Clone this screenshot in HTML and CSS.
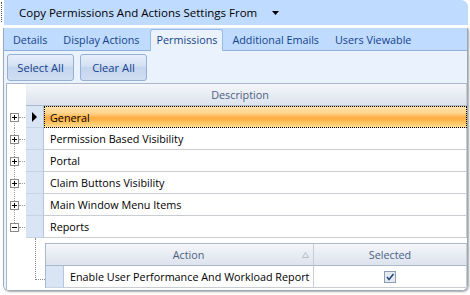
FILE: index.html
```html
<!DOCTYPE html>
<html lang="en">
<head>
    <meta charset="UTF-8">
    <title>Permissions</title>
    <link rel="stylesheet" href="styles.css">
</head>
<body>
<div class="page">
    <span class="focus-edge"></span>
    <div class="frame">
        <div class="title">
            Copy Permissions And Actions Settings From
            <svg class="caret" width="7" height="4" viewBox="0 0 7 4"><path d="M0 0h7L3.5 4z" fill="#000"/></svg>
        </div>
        <div class="title-gap"></div>

        <div class="tab-box">
            <div class="tabs">
                <span class="tab">Details</span>
                <span class="tab">Display Actions</span>
                <span class="tab active">Permissions</span>
                <span class="tab">Additional Emails</span>
                <span class="tab">Users Viewable</span>
            </div>

            <div class="tab-page">
                <div class="button-group">
                    <button class="button">Select All</button>
                    <button class="button">Clear All</button>
                </div>

                <div class="grid">
                    <div class="row head">
                        <div class="tree"></div>
                        <div class="cell head-cell">Description</div>
                    </div>

                    <div class="row">
                        <div class="tree first">
                            <svg class="expander" width="9" height="9" viewBox="0 0 9 9"><rect x="0.5" y="0.5" width="8" height="8" fill="#fff" stroke="#8a8a8a"/><path d="M2 4.5h5M4.5 2v5" stroke="#000"/></svg>
                            <span class="tick"></span>
                        </div>
                        <div class="row-head">
                            <svg width="5" height="10" viewBox="0 0 5 10"><path d="M0 0l5 5-5 5z" fill="#000"/></svg>
                        </div>
                        <div class="cell selected">General</div>
                    </div>

                    <div class="row">
                        <div class="tree mid">
                            <svg class="expander" width="9" height="9" viewBox="0 0 9 9"><rect x="0.5" y="0.5" width="8" height="8" fill="#fff" stroke="#8a8a8a"/><path d="M2 4.5h5M4.5 2v5" stroke="#000"/></svg>
                            <span class="tick"></span>
                        </div>
                        <div class="row-head"></div>
                        <div class="cell">Permission Based Visibility</div>
                    </div>

                    <div class="row">
                        <div class="tree mid">
                            <svg class="expander" width="9" height="9" viewBox="0 0 9 9"><rect x="0.5" y="0.5" width="8" height="8" fill="#fff" stroke="#8a8a8a"/><path d="M2 4.5h5M4.5 2v5" stroke="#000"/></svg>
                            <span class="tick"></span>
                        </div>
                        <div class="row-head"></div>
                        <div class="cell">Portal</div>
                    </div>

                    <div class="row">
                        <div class="tree mid">
                            <svg class="expander" width="9" height="9" viewBox="0 0 9 9"><rect x="0.5" y="0.5" width="8" height="8" fill="#fff" stroke="#8a8a8a"/><path d="M2 4.5h5M4.5 2v5" stroke="#000"/></svg>
                            <span class="tick"></span>
                        </div>
                        <div class="row-head"></div>
                        <div class="cell">Claim Buttons Visibility</div>
                    </div>

                    <div class="row">
                        <div class="tree mid">
                            <svg class="expander" width="9" height="9" viewBox="0 0 9 9"><rect x="0.5" y="0.5" width="8" height="8" fill="#fff" stroke="#8a8a8a"/><path d="M2 4.5h5M4.5 2v5" stroke="#000"/></svg>
                            <span class="tick"></span>
                        </div>
                        <div class="row-head"></div>
                        <div class="cell">Main Window Menu Items</div>
                    </div>

                    <div class="row">
                        <div class="tree last">
                            <svg class="expander" width="9" height="9" viewBox="0 0 9 9"><rect x="0.5" y="0.5" width="8" height="8" fill="#fff" stroke="#8a8a8a"/><path d="M2 4.5h5" stroke="#000"/></svg>
                            <span class="tick"></span>
                        </div>
                        <div class="row-head"></div>
                        <div class="cell">Reports</div>
                    </div>

                    <!-- child band of Reports -->
                    <div class="detail">
                        <div class="tree"></div>
                        <div class="connector"><span class="elbow"></span></div>
                        <div class="child-grid">
                            <div class="child-row head">
                                <div class="row-head head-cell"></div>
                                <div class="cell head-cell action-col">
                                    Action
                                    <svg class="sort" width="7" height="6" viewBox="0 0 7 6"><path d="M3.5 0.5L6.5 5.5H0.5z" fill="none" stroke="#b9bec6"/></svg>
                                </div>
                                <div class="cell head-cell selected-col">Selected</div>
                            </div>
                            <div class="child-row">
                                <div class="row-head"></div>
                                <div class="cell action-col">Enable User Performance And Workload Report</div>
                                <div class="cell selected-col">
                                    <svg width="12" height="12" viewBox="0 0 12 12"><rect x="0.5" y="0.5" width="11" height="11" fill="#e4eaf2" stroke="#8e9db3"/><path d="M3 6l2 2.5L9.5 3" fill="none" stroke="#2c4a7c" stroke-width="1.6"/></svg>
                                </div>
                            </div>
                        </div>
                    </div>
                </div>
            </div>
        </div>
    </div>
</div>
</body>
</html>
```

FILE: styles.css
```css
/* office 2007 blue */
:root {
    --office-blue: #bfdbff;
    --office-dark: #15428b;
    --page-blue: #eaf2fd;
    --line-gray: #c9ccd1;
    --row-head: #d9e5f4;
}

body {
    margin: 0;
    padding: 0;
    background: #fff;
    font-family: 'Open Sans', 'Noto Sans', sans-serif;
    font-size: 10.8px;
    color: #000;
}

.page {
    display: flex;
    height: 295px;
}

.focus-edge {
    width: 0;
    height: 20px;
    margin: 2px 0 0 1px;
    border-left: 1px dotted #555;
}

.frame {
    width: 465px;
    margin-left: 1px;
    display: flex;
    flex-direction: column;
}

.title {
    height: 25px;
    margin-left: 1px;
    padding-left: 15px;
    display: flex;
    align-items: center;
    font-size: 11.5px;
    background: var(--office-blue);
    border-top-right-radius: 7px;
}

.caret {
    margin-left: 15px;
    margin-top: 1px;
}

.title-gap {
    height: 3px;
}

.tab-box {
    height: 262px;
    display: flex;
    flex-direction: column;
    border: 1px solid #9ea9b8;
    border-top: none;
    border-radius: 0 0 6px 6px;
    box-shadow: 1px 1px 2px rgba(0, 0, 0, 0.35);
    overflow: hidden;
}

.tabs {
    height: 22px;
    display: flex;
    align-items: flex-end;
    padding-left: 1px;
    background: var(--office-blue);
    border-bottom: 1px solid #8fb0dc;
}

.tab {
    height: 20px;
    padding: 0 7px;
    line-height: 20px;
    color: var(--office-dark);
    border: 1px solid transparent;
    border-bottom: none;
    white-space: nowrap;
}

.tab.active {
    height: 21px;
    padding: 0 5px;
    margin: 0 1px -1px 3px;
    background: var(--page-blue);
    border-color: #9cbbe3;
    border-radius: 3px 3px 0 0;
}

.tab-page {
    flex: 1;
    display: flex;
    flex-direction: column;
    padding: 3px 0 0 2px;
    background: var(--page-blue);
}

.button-group {
    display: flex;
    gap: 6px;
    padding-left: 1px;
}

.button {
    width: 67px;
    height: 27px;
    padding: 0;
    font-family: inherit;
    font-size: 11.2px;
    color: var(--office-dark);
    background: linear-gradient(#e6eefa, #d3e0f3 45%, #c4d5ef 50%, #d1def2);
    border: 1px solid #96afd3;
    border-radius: 3px;
}

.grid {
    flex: 1;
    margin-top: 2px;
    background: #fff;
    border-top: 1px solid #a9b8ca;
    border-left: 1px solid #a9b8ca;
    display: flex;
    flex-direction: column;
}

.row {
    height: 22px;
    display: flex;
}

.tree {
    width: 19px;
    flex: none;
    display: flex;
    align-items: center;
    padding-left: 3px;
    box-sizing: border-box;
    background-repeat: no-repeat;
}

.tree.first {
    background-image: repeating-linear-gradient(#9a9a9a 0 1px, transparent 1px 2px);
    background-size: 1px 11px;
    background-position: 7px 11px;
}

.tree.mid {
    background-image: repeating-linear-gradient(#9a9a9a 0 1px, transparent 1px 2px);
    background-size: 1px 22px;
    background-position: 7px 0;
}

.tree.last {
    background-image: repeating-linear-gradient(#9a9a9a 0 1px, transparent 1px 2px);
    background-size: 1px 11px;
    background-position: 7px 0;
}

.expander {
    flex: none;
}

.tick {
    width: 6px;
    border-top: 1px dotted #9a9a9a;
}

.row-head {
    width: 18px;
    flex: none;
    display: flex;
    align-items: center;
    justify-content: center;
    background: var(--row-head);
    border-right: 1px solid #b6c6da;
    border-bottom: 1px solid #c7d4e4;
    box-sizing: border-box;
}

.cell {
    flex: 1;
    display: flex;
    align-items: center;
    padding-left: 6px;
    white-space: nowrap;
    border-bottom: 1px solid var(--line-gray);
    border-right: 1px solid var(--line-gray);
}

.cell.selected {
    border: 1px dotted #000;
    padding-left: 5px;
    background: linear-gradient(#ffe3ad 0%, #ffd58d 30%, #ffab40 55%, #ffc666 80%, #ffdc8f 100%);
}

.head-cell {
    justify-content: center;
    padding-left: 0;
    color: #4b5f82;
    background: linear-gradient(#f4f6fa, #e8ecf3 50%, #dde4ee);
    border-bottom: 1px solid #a9b8ca;
}

.row.head .head-cell {
    padding-right: 12px;
}

.detail {
    flex: 1;
    display: flex;
}

.connector {
    width: 19px;
    flex: none;
    padding-left: 9px;
    box-sizing: border-box;
}

.elbow {
    display: block;
    width: 10px;
    height: 42px;
    border-left: 1px dotted #8a8a8a;
    border-bottom: 1px dotted #8a8a8a;
    box-sizing: border-box;
}

.child-grid {
    flex: 1;
    margin-top: 5px;
    align-self: flex-start;
    border-top: 1px solid #a9b8ca;
    border-left: 1px solid #a9b8ca;
}

.child-row {
    height: 22px;
    display: flex;
}

.child-row.head .row-head {
    border-right: none;
    border-bottom: 1px solid #a9b8ca;
}

.action-col {
    flex: none;
    width: 250px;
    box-sizing: border-box;
}

.child-row.head .action-col {
    position: relative;
    padding-left: 0;
}

.sort {
    position: absolute;
    right: 4px;
    top: 8px;
}

.selected-col {
    justify-content: center;
    padding-left: 0;
    padding-right: 0;
}
```
